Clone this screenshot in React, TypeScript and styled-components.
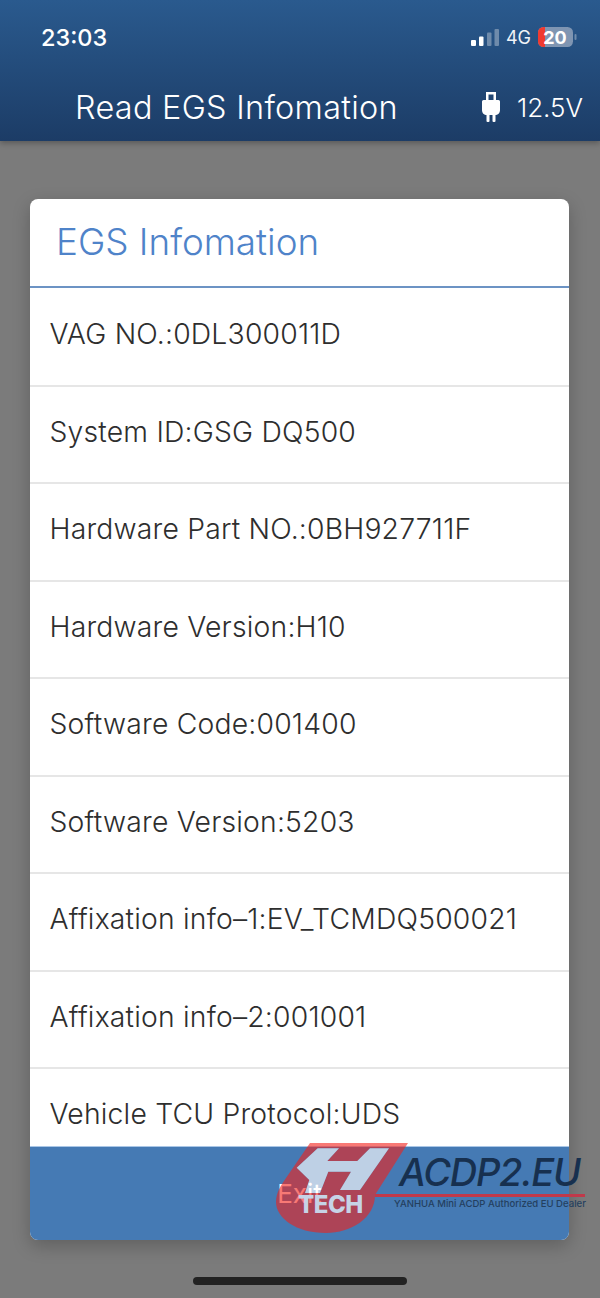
import React from "react";
import styled, { createGlobalStyle } from "styled-components";

const Global = createGlobalStyle`
  html, body { margin: 0; padding: 0; }
  body { background: #7b7b7b; font-family: "Inter", "Liberation Sans", sans-serif; }
`;

const Screen = styled.div`
  position: relative;
  width: 600px;
  height: 1298px;
  overflow: hidden;
  background: #7b7b7b;
  display: flex;
  flex-direction: column;
`;

const Header = styled.header`
  height: 141px;
  box-sizing: border-box;
  padding: 0 17px 0 41px;
  background: linear-gradient(180deg, #2a5a8e 0%, #1c3c66 100%);
  box-shadow: 0 2px 6px rgba(0, 0, 0, 0.3);
  color: #fff;
  display: flex;
  flex-direction: column;
`;

const StatusBar = styled.div`
  height: 74px;
  display: flex;
  align-items: center;
  justify-content: space-between;
`;

const Clock = styled.span`
  font-size: 23.500px;
  font-weight: 500;
`;

const StatusIcons = styled.div`
  display: flex;
  align-items: center;
  gap: 7px;
  margin-right: 6px;
  color: #f0f3f7;
`;

const Network = styled.span`
  font-size: 18px;
  font-weight: 400;
`;

const NavBar = styled.div`
  display: flex;
  align-items: center;
  justify-content: space-between;
  padding-left: 34px;
  height: 66px;
`;

const NavTitle = styled.h1`
  margin: 0;
  font-size: 32.400px;
  font-weight: 300;
  letter-spacing: 0.3px;
`;

const Voltage = styled.div`
  display: flex;
  align-items: center;
  gap: 17px;
  font-size: 26px;
  font-weight: 300;
`;

const Body = styled.main`
  flex: 1;
  padding: 58px 31px 0 30px;
`;

const Card = styled.section`
  height: 1041px;
  display: flex;
  flex-direction: column;
  background: #fff;
  border-radius: 8px;
  overflow: hidden;
  box-shadow: 0 6px 18px rgba(0, 0, 0, 0.22);
`;

const CardTitle = styled.h2`
  margin: 0;
  height: 89px;
  box-sizing: border-box;
  padding: 20px 0 0 26px;
  font-size: 36.800px;
  font-weight: 300;
  color: #4f83c9;
  border-bottom: 2px solid #6c93c4;
`;

const List = styled.div`
  flex: 1;
  overflow: hidden;
  padding-top: 1px;
`;

const Row = styled.div`
  height: 97.5px;
  box-sizing: border-box;
  padding: 28px 0 0 19.500px;
  font-size: 28.300px;
  font-weight: 300;
  letter-spacing: 0.2px;
  color: #2e2e2e;
  border-bottom: 2px solid #e6e6e6;
`;

const ExitButton = styled.button`
  height: 94px;
  flex-shrink: 0;
  border: 0;
  border-top: 1px solid #a9c6e6;
  background: #457ab4;
  color: #fff;
  font: 400 26px "Inter", sans-serif;
`;

const HomeBar = styled.div`
  position: absolute;
  left: 193px;
  bottom: 13px;
  width: 214px;
  height: 8px;
  border-radius: 4px;
  background: #222;
`;

const Watermark = styled.div`
  position: absolute;
  left: 276px;
  top: 1143px;
  width: 320px;
  height: 92px;
  pointer-events: none;
`;

const MarkSvg = styled.svg`
  position: absolute;
  left: 0;
  top: 0;
`;

const TechText = styled.span`
  position: absolute;
  left: 22px;
  top: 47px;
  font-size: 24px;
  font-weight: 800;
  letter-spacing: -0.5px;
  color: #c6d3e6;
`;

const Brand = styled.span`
  position: absolute;
  left: 123px;
  top: 6px;
  font-size: 38px;
  font-style: italic;
  font-weight: 500;
  letter-spacing: -1.300px;
  color: #17304f;
`;

const BrandLine = styled.span`
  position: absolute;
  left: 99px;
  top: 51px;
  width: 210px;
  height: 2.500px;
  background: #c0394a;
`;

const Tagline = styled.span`
  position: absolute;
  left: 118px;
  top: 55px;
  font-size: 9.550px;
  font-weight: 500;
  color: #24405f;
  white-space: nowrap;
`;

const rows = [
  "VAG NO.:0DL300011D",
  "System ID:GSG DQ500",
  "Hardware Part NO.:0BH927711F",
  "Hardware Version:H10",
  "Software Code:001400",
  "Software Version:5203",
  "Affixation info–1:EV_TCMDQ500021",
  "Affixation info–2:001001",
  "Vehicle TCU Protocol:UDS",
];

function Signal() {
  return (
    <svg width="28" height="17" viewBox="0 0 28 17">
      <rect x="0" y="11" width="5" height="6" rx="1" fill="#fff" />
      <rect x="8" y="7.500" width="4.500" height="9.500" rx="1" fill="#fff" />
      <rect x="16" y="3.500" width="4.500" height="13.500" rx="1" fill="#6f8bab" />
      <rect x="23.500" y="0" width="4.500" height="17" rx="1" fill="#6f8bab" />
    </svg>
  );
}

function Battery() {
  return (
    <svg width="39" height="20" viewBox="0 0 39 20">
      <rect x="0" y="0" width="35" height="20" rx="5.500" fill="#7f95b2" />
      <path d="M5.500 0H7V20H5.500A5.500 5.500 0 0 1 0 14.500V5.500A5.500 5.500 0 0 1 5.500 0Z" fill="#f03a30" />
      <rect x="36.500" y="7" width="2" height="6" rx="1" fill="#6f8bab" />
      <text x="17" y="16.500" textAnchor="middle" fontSize="18" fontWeight="700" fontFamily="Inter, sans-serif" fill="#fff">20</text>
    </svg>
  );
}

function Plug() {
  return (
    <svg width="18" height="30" viewBox="0 0 18 30">
      <path d="M4 0H14V8H16.500A1.500 1.500 0 0 1 18 9.500V18C18 21 16 23 13 23H5C2 23 0 21 0 18V9.500A1.500 1.500 0 0 1 1.500 8H4ZM6.500 2.500V8H11.500V2.500Z" fill="#fff" fillRule="evenodd" />
      <rect x="4.500" y="22" width="3" height="8" rx="1" fill="#fff" />
      <rect x="10.500" y="22" width="3" height="8" rx="1" fill="#fff" />
    </svg>
  );
}

const hPath = "M41.700 5.300H63L51.300 18H81.300L94 5.300H113L84 47H64L75 28.700H52.300L44 50H29L33.300 37L20.700 24.700Z";

function LogoMark() {
  return (
    <MarkSvg width="136" height="92" viewBox="0 0 136 92">
      <path
        d={"M34 0H132L99 52C99 75 75 90 50 90C20 90 0 75 0 59C0 50 5 42 10 35Z" + hPath}
        fill="rgb(244,32,25)"
        fillOpacity="0.6"
        fillRule="evenodd"
      />
      <path d={hPath} fill="#fff" fillOpacity="0.65" />
    </MarkSvg>
  );
}

export default function App() {
  return (
    <>
      <Global />
      <Screen>
        <Header>
          <StatusBar>
            <Clock>23:03</Clock>
            <StatusIcons>
              <Signal />
              <Network>4G</Network>
              <Battery />
            </StatusIcons>
          </StatusBar>
          <NavBar>
            <NavTitle>Read EGS Infomation</NavTitle>
            <Voltage>
              <Plug />
              12.5V
            </Voltage>
          </NavBar>
        </Header>
        <Body>
          <Card>
            <CardTitle>EGS Infomation</CardTitle>
            <List>
              {rows.map((r) => (
                <Row key={r}>{r}</Row>
              ))}
            </List>
            <ExitButton>Exit</ExitButton>
          </Card>
        </Body>
        <HomeBar />
        <Watermark>
          <LogoMark />
          <TechText>TECH</TechText>
          <Brand>ACDP2.EU</Brand>
          <BrandLine />
          <Tagline>YANHUA Mini ACDP Authorized EU Dealer</Tagline>
        </Watermark>
      </Screen>
    </>
  );
}
